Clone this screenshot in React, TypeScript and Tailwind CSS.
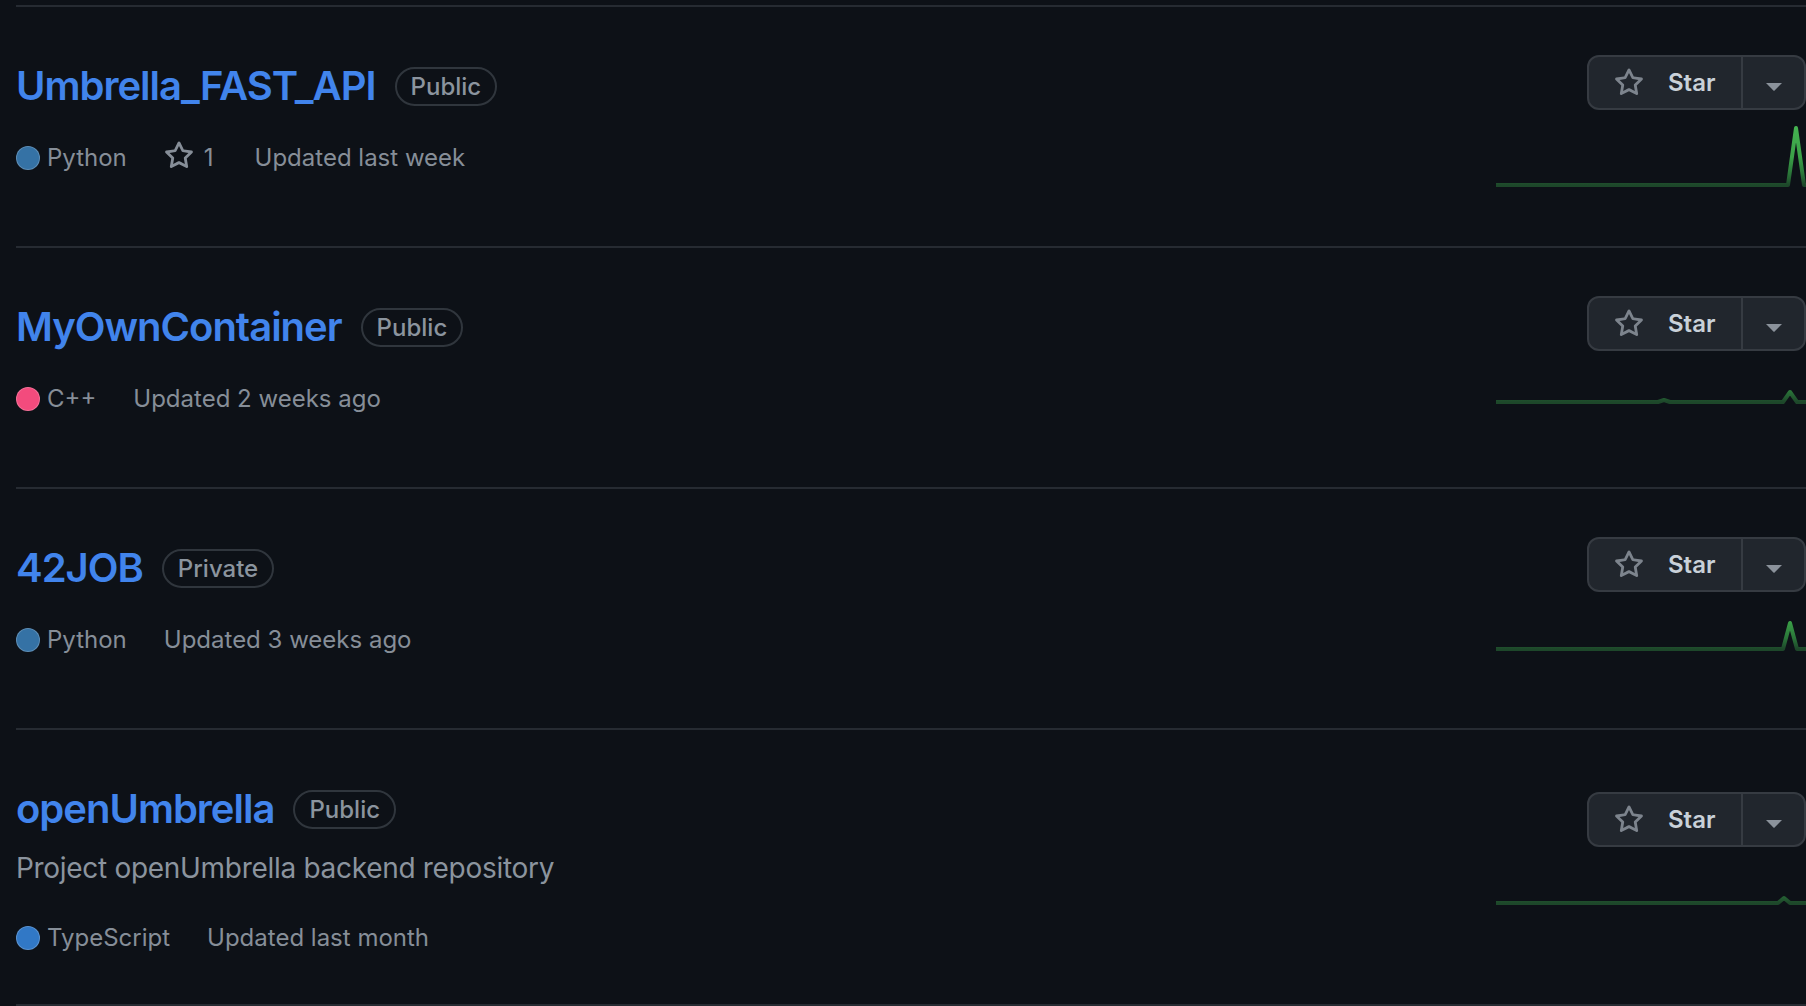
import { useId } from 'react';

type Repo = {
  name: string;
  visibility: 'Public' | 'Private';
  description?: string;
  language: string;
  langColor: string;
  stars?: number;
  updated: string;
  /** button offset from top of row content */
  starTop: string;
  /** sparkline offset below the star button */
  sparkTop: string;
  points: string;
};

const repos: Repo[] = [
  {
    name: 'Umbrella_FAST_API',
    visibility: 'Public',
    language: 'Python',
    langColor: 'bg-[#3572a5]',
    stars: 1,
    updated: 'Updated last week',
    starTop: 'mt-[48px]',
    sparkTop: 'mt-[14px]',
    points: '0,61 292,61 300,4 308,61 310,61',
  },
  {
    name: 'MyOwnContainer',
    visibility: 'Public',
    language: 'C++',
    langColor: 'bg-[#f34b7d]',
    updated: 'Updated 2 weeks ago',
    starTop: 'mt-[48px]',
    sparkTop: '-mt-[10px]',
    points: '0,61 162,61 168,59 174,61 287,61 294,51 301,61 310,61',
  },
  {
    name: '42JOB',
    visibility: 'Private',
    language: 'Python',
    langColor: 'bg-[#3572a5]',
    updated: 'Updated 3 weeks ago',
    starTop: 'mt-[48px]',
    sparkTop: '-mt-[4px]',
    points: '0,61 287,61 294,35 301,61 310,61',
  },
  {
    name: 'openUmbrella',
    visibility: 'Public',
    description: 'Project openUmbrella backend repository',
    language: 'TypeScript',
    langColor: 'bg-[#3178c6]',
    updated: 'Updated last month',
    starTop: 'mt-[62px]',
    sparkTop: '-mt-[5px]',
    points: '0,61 282,61 288,56 294,61 310,61',
  },
];

function StarIcon({ className }: { className?: string }) {
  return (
    <svg viewBox="0 0 16 16" className={className} fill="currentColor" aria-hidden="true">
      <path d="M8 .25a.75.75 0 0 1 .673.418l1.882 3.815 4.21.612a.75.75 0 0 1 .416 1.279l-3.046 2.97.719 4.192a.751.751 0 0 1-1.088.791L8 12.347l-3.766 1.98a.75.75 0 0 1-1.088-.79l.72-4.194L.818 6.374a.75.75 0 0 1 .416-1.28l4.21-.611L7.327.668A.75.75 0 0 1 8 .25Zm0 2.445L6.615 5.5a.75.75 0 0 1-.564.41l-3.097.45 2.24 2.184a.75.75 0 0 1 .216.664l-.528 3.084 2.769-1.456a.75.75 0 0 1 .698 0l2.77 1.456-.53-3.084a.75.75 0 0 1 .216-.664l2.24-2.183-3.096-.45a.75.75 0 0 1-.564-.41L8 2.694Z" />
    </svg>
  );
}

function Sparkline({ points, className }: { points: string; className?: string }) {
  const id = useId();
  return (
    <svg width="310" height="64" viewBox="0 0 310 64" className={className}>
      <defs>
        <linearGradient id={id} gradientUnits="userSpaceOnUse" x1="0" y1="61" x2="0" y2="0">
          <stop offset="0" stopColor="#1d472a" />
          <stop offset="0.18" stopColor="#2a7539" />
          <stop offset="0.45" stopColor="#3a9f47" />
          <stop offset="1" stopColor="#46b552" />
        </linearGradient>
      </defs>
      <polyline
        points={points}
        fill="none"
        stroke={`url(#${id})`}
        strokeWidth="4"
        strokeLinejoin="round"
      />
    </svg>
  );
}

function StarButton() {
  return (
    <div className="flex h-[55px] rounded-[12px] border-2 border-[#363b42] bg-[#21262d]">
      <div className="flex w-[152px] items-center pl-[25px]">
        <StarIcon className="h-[30px] w-[30px] text-[#7d848d]" />
        <span className="ml-[24px] text-[24px] font-semibold leading-none text-[#c9d1d9]">Star</span>
      </div>
      <div className="flex w-[63px] items-center justify-center border-l-2 border-[#363b42] pt-[8px]">
        <svg viewBox="0 0 16 8" className="h-[8px] w-[16px] text-[#8b929b]" fill="currentColor">
          <path d="M0 0h16L8.6 7.4a.85.85 0 0 1-1.2 0Z" />
        </svg>
      </div>
    </div>
  );
}

function RepoRow({ repo }: { repo: Repo }) {
  return (
    <li
      className={
        repo.description
          ? 'flex justify-between border-b-2 border-[#262b32] pb-[48px]'
          : 'flex h-[241px] justify-between border-b-2 border-[#262b32]'
      }
    >
      <div className="pt-[49px]">
        <div className="flex items-center gap-[19px]">
          <h3 className="text-[40px] font-semibold leading-[60px] tracking-[-1px] text-[#4184ec]">
            {repo.name}
          </h3>
          <span className="rounded-full border-2 border-[#30363d] px-[14px] text-[24px] font-medium leading-[35px] text-[#8b949e]">
            {repo.visibility}
          </span>
        </div>

        {repo.description && (
          <p className="mt-[8px] text-[28px] leading-[42px] tracking-[-0.3px] text-[#8b949e]">
            {repo.description}
          </p>
        )}

        <div
          className={
            repo.description
              ? 'mt-[31px] flex items-center gap-[37px] text-[24px] leading-[36px] text-[#868e98]'
              : 'mt-[24px] flex items-center gap-[37px] text-[24px] leading-[36px] text-[#868e98]'
          }
        >
          <span className="flex items-center gap-[7px]">
            <span className={`h-[24px] w-[24px] rounded-full border border-white/20 ${repo.langColor}`} />
            {repo.language}
          </span>
          {repo.stars !== undefined && (
            <span className="mr-[4px] flex items-center gap-[10px]">
              <StarIcon className="h-[30px] w-[30px] -translate-y-[2px]" />
              {repo.stars}
            </span>
          )}
          <span>{repo.updated}</span>
        </div>
      </div>

      <div className="flex w-[310px] flex-col items-end">
        <div className={repo.starTop}>
          <StarButton />
        </div>
        <Sparkline points={repo.points} className={repo.sparkTop} />
      </div>
    </li>
  );
}

export default function App() {
  return (
    <div className="min-h-screen overflow-hidden bg-[#0d1117] pl-[16px] font-[family-name:Inter,sans-serif]">
      <div className="mt-[5px] h-[2px] bg-[#262b32]" />
      <ul>
        {repos.map((repo) => (
          <RepoRow key={repo.name} repo={repo} />
        ))}
      </ul>
    </div>
  );
}
